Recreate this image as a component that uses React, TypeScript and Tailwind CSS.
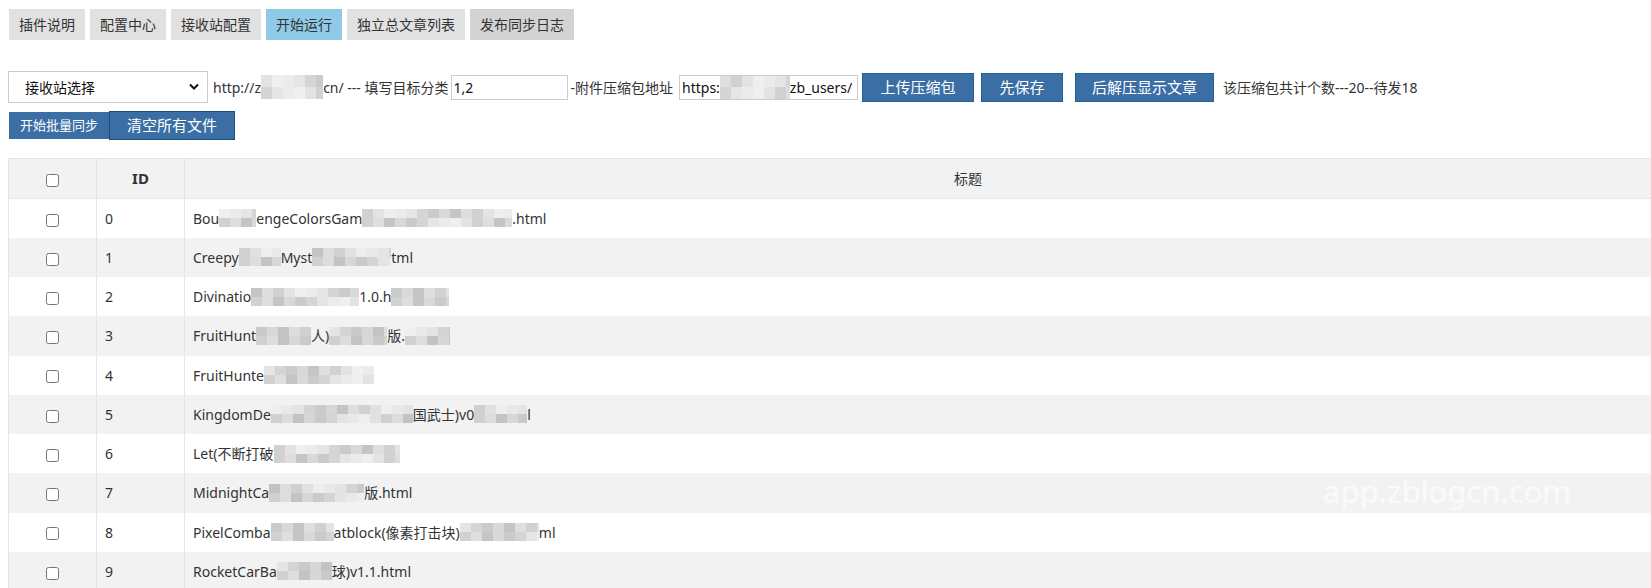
import React from "react";

const tabs = [
  { label: "插件说明" },
  { label: "配置中心" },
  { label: "接收站配置" },
  { label: "开始运行", active: true },
  { label: "独立总文章列表" },
  { label: "发布同步日志", hover: true },
];

const shades = ["#e3e3e3", "#d5d5d5", "#cdcdcd", "#e9e9e9", "#c6c6c6", "#dbdbdb", "#eeeeee", "#d1d1d1", "#bfbfbf", "#e0e0e0"];

// pixelated redaction block
function Blur({ w, seed = 1, h = 18 }: { w: number; seed?: number; h?: number }) {
  const n = Math.ceil(w / 11);
  const cells = [];
  for (let i = 0; i < n; i++) {
    const c = shades[(i * 7 + seed * 3) % shades.length];
    const c2 = shades[(i * 3 + seed * 5 + 2) % shades.length];
    cells.push(
      <span key={i} className="flex flex-col" style={{ width: Math.min(11, w - i * 11) }}>
        <span className="flex-1" style={{ background: c }} />
        <span className="flex-1" style={{ background: c2 }} />
      </span>
    );
  }
  return (
    <span className="inline-flex align-middle opacity-90" style={{ width: w, height: h }}>
      {cells}
    </span>
  );
}

type Seg = string | number;

const rows: Seg[][] = [
  ["Bou", 37, "engeColorsGam", 150, ".html"],
  ["Creepy", 42, "Myst", 79, "tml"],
  ["Divinatio", 108, "1.0.h", 58],
  ["FruitHunt", 55, "人)", 58, "版.", 45],
  ["FruitHunte", 110],
  ["KingdomDe", 142, "国武士)v0", 53, "l"],
  ["Let(不断打破", 126],
  ["MidnightCa", 95, "版.html"],
  ["PixelComba", 63, "atblock(像素打击块)", 79, "ml"],
  ["RocketCarBa", 55, "球)v1.1.html"],
  ["SkyRunner", 90, ".html"],
];

function Title({ segs, seed }: { segs: Seg[]; seed: number }) {
  return (
    <span className="inline-flex items-center whitespace-nowrap">
      {segs.map((s, i) =>
        typeof s === "number" ? <Blur key={i} w={s} seed={seed + i} /> : <span key={i}>{s}</span>
      )}
    </span>
  );
}

export default function App() {
  return (
    <div className="relative h-screen overflow-hidden bg-white text-[14px] text-[#333] font-['Noto_Sans','Noto_Sans_CJK_SC',sans-serif]">
      {/* top tabs */}
      <div className="flex gap-[5px] pl-[9px] pt-[9px]">
        {tabs.map((t) => (
          <div
            key={t.label}
            className={
              "h-[31px] px-[10px] text-[14px] leading-[31px] " +
              (t.active ? "bg-[#8fcbe8]" : t.hover ? "bg-[#d3d3d3]" : "bg-[#e1e1e1]")
            }
          >
            {t.label}
          </div>
        ))}
      </div>

      {/* controls row */}
      <div className="mt-[31px] flex items-center pl-2 whitespace-nowrap">
        <div className="relative h-[32px] w-[200px] border border-[#cccccc] bg-white">
          <span className="absolute left-[16px] top-[5px] text-[14px] text-[#111]">接收站选择</span>
          <svg className="absolute right-[8px] top-[11px]" width="10" height="8" viewBox="0 0 10 8">
            <path d="M1 1.5 L5 5.5 L9 1.5" fill="none" stroke="#111" strokeWidth="2" />
          </svg>
        </div>
        <span className="ml-[5px]">http://z</span>
        <Blur w={62} seed={3} h={24} />
        <span>cn/ --- 填写目标分类</span>
        <input
          readOnly
          value="1,2"
          className="ml-[2px] h-[25px] w-[117px] border border-[#cccccc] px-[2px] text-[14px] text-[#111] outline-none"
        />
        <span className="ml-[3px]">-附件压缩包地址</span>
        <div className="ml-[6px] flex h-[25px] w-[179px] items-center overflow-hidden border border-[#cccccc] px-[2px] text-[#111]">
          <span>https:</span>
          <Blur w={70} seed={5} h={24} />
          <span>zb_users/</span>
        </div>
        <button className="ml-[4px] h-[29px] w-[112px] border border-[#1c6491] bg-[#3b6ea5] text-[15px] text-white">
          上传压缩包
        </button>
        <button className="ml-[7px] h-[29px] w-[82px] border border-[#1c6491] bg-[#3b6ea5] text-[15px] text-white">
          先保存
        </button>
        <button className="ml-[12px] h-[29px] w-[139px] border border-[#1c6491] bg-[#3b6ea5] text-[15px] text-white">
          后解压显示文章
        </button>
        <span className="ml-[9px]">该压缩包共计个数---20--待发18</span>
      </div>

      {/* batch buttons */}
      <div className="mt-[8px] flex items-center pl-[9px]">
        <button className="h-[27px] w-[100px] bg-[#3b6ea5] text-[13px] text-white">开始批量同步</button>
        <button className="h-[29px] w-[126px] border border-[#1b4f78] bg-[#3b6ea5] text-[15px] text-white">
          清空所有文件
        </button>
      </div>

      {/* article table */}
      <div className="mt-[18px] pl-2">
        <table className="w-[1744px] border-collapse">
          <thead>
            <tr className="h-[40px] bg-[#f2f2f2]">
              <th className="w-[88px] border border-[#e6e6e6] font-normal">
                <input type="checkbox" className="align-middle" />
              </th>
              <th className="w-[88px] border border-[#e6e6e6] text-[15px] font-bold">ID</th>
              <th className="border border-[#e6e6e6] text-[14px] font-normal">标题</th>
            </tr>
          </thead>
          <tbody>
            {rows.map((r, i) => (
              <tr key={i} className={"h-[39.25px] " + (i % 2 === 1 ? "bg-[#f2f2f2]" : "bg-white")}>
                <td className="border-x border-[#e6e6e6] text-center">
                  <input type="checkbox" className="align-middle" />
                </td>
                <td className="border-x border-[#e6e6e6] pl-2">{i}</td>
                <td className="border-x border-[#e6e6e6] pl-2">
                  <Title segs={r} seed={i * 2 + 1} />
                </td>
              </tr>
            ))}
          </tbody>
        </table>
      </div>

      {/* watermark */}
      <div className="pointer-events-none absolute left-[1323px] top-[476px] text-[31px] leading-none text-white/70">
        app.zblogcn.com
      </div>
    </div>
  );
}
